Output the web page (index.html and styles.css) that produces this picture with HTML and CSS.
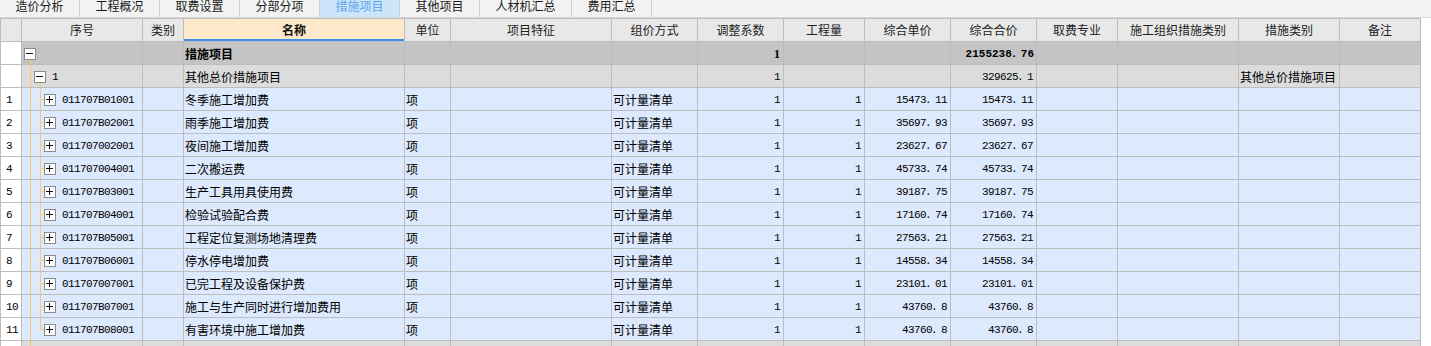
FILE: index.html
```html
<!DOCTYPE html>
<html lang="zh-CN">
<head>
<meta charset="utf-8">
<title>措施项目</title>
<link rel="stylesheet" href="styles.css">
</head>
<body>
<div class="tabs">
  <div class="tab"><span>造价分析</span></div>
  <div class="tab"><span>工程概况</span></div>
  <div class="tab"><span>取费设置</span></div>
  <div class="tab"><span>分部分项</span></div>
  <div class="tab active"><span>措施项目</span></div>
  <div class="tab"><span>其他项目</span></div>
  <div class="tab wide"><span>人材机汇总</span></div>
  <div class="tab"><span>费用汇总</span></div>
</div>
<div class="table">
  <div class="row hd">
    <div class="c n"></div><div class="c">序号</div><div class="c">类别</div><div class="c name">名称</div><div class="c">单位</div><div class="c">项目特征</div><div class="c">组价方式</div><div class="c">调整系数</div><div class="c">工程量</div><div class="c">综合单价</div><div class="c">综合合价</div><div class="c">取费专业</div><div class="c">施工组织措施类别</div><div class="c">措施类别</div><div class="c">备注</div>
  </div>
  <div class="row r0">
    <div class="c n"></div><div class="c seq"><span class="bx minus l0"></span></div><div class="c"></div><div class="c b">措施项目</div><div class="c"></div><div class="c"></div><div class="c"></div><div class="c bs">1</div><div class="c"></div><div class="c"></div><div class="c num bm">2155238<span class="d">.</span>76</div><div class="c"></div><div class="c"></div><div class="c"></div><div class="c"></div>
  </div>
  <div class="row r1">
    <div class="c n"></div><div class="c seq"><span class="bx minus l1"></span><span class="code">1</span></div><div class="c"></div><div class="c">其他总价措施项目</div><div class="c"></div><div class="c"></div><div class="c"></div><div class="c num">1</div><div class="c"></div><div class="c"></div><div class="c num">329625<span class="d">.</span>1</div><div class="c"></div><div class="c"></div><div class="c">其他总价措施项目</div><div class="c"></div>
  </div>
  <div class="row rd">
    <div class="c n">1</div><div class="c seq"><span class="bx plus l2"></span><span class="code">011707B01001</span></div><div class="c"></div><div class="c">冬季施工增加费</div><div class="c">项</div><div class="c"></div><div class="c">可计量清单</div><div class="c num">1</div><div class="c num">1</div><div class="c num">15473<span class="d">.</span>11</div><div class="c num">15473<span class="d">.</span>11</div><div class="c"></div><div class="c"></div><div class="c"></div><div class="c"></div>
  </div>
  <div class="row rd">
    <div class="c n">2</div><div class="c seq"><span class="bx plus l2"></span><span class="code">011707B02001</span></div><div class="c"></div><div class="c">雨季施工增加费</div><div class="c">项</div><div class="c"></div><div class="c">可计量清单</div><div class="c num">1</div><div class="c num">1</div><div class="c num">35697<span class="d">.</span>93</div><div class="c num">35697<span class="d">.</span>93</div><div class="c"></div><div class="c"></div><div class="c"></div><div class="c"></div>
  </div>
  <div class="row rd">
    <div class="c n">3</div><div class="c seq"><span class="bx plus l2"></span><span class="code">011707002001</span></div><div class="c"></div><div class="c">夜间施工增加费</div><div class="c">项</div><div class="c"></div><div class="c">可计量清单</div><div class="c num">1</div><div class="c num">1</div><div class="c num">23627<span class="d">.</span>67</div><div class="c num">23627<span class="d">.</span>67</div><div class="c"></div><div class="c"></div><div class="c"></div><div class="c"></div>
  </div>
  <div class="row rd">
    <div class="c n">4</div><div class="c seq"><span class="bx plus l2"></span><span class="code">011707004001</span></div><div class="c"></div><div class="c">二次搬运费</div><div class="c">项</div><div class="c"></div><div class="c">可计量清单</div><div class="c num">1</div><div class="c num">1</div><div class="c num">45733<span class="d">.</span>74</div><div class="c num">45733<span class="d">.</span>74</div><div class="c"></div><div class="c"></div><div class="c"></div><div class="c"></div>
  </div>
  <div class="row rd">
    <div class="c n">5</div><div class="c seq"><span class="bx plus l2"></span><span class="code">011707B03001</span></div><div class="c"></div><div class="c">生产工具用具使用费</div><div class="c">项</div><div class="c"></div><div class="c">可计量清单</div><div class="c num">1</div><div class="c num">1</div><div class="c num">39187<span class="d">.</span>75</div><div class="c num">39187<span class="d">.</span>75</div><div class="c"></div><div class="c"></div><div class="c"></div><div class="c"></div>
  </div>
  <div class="row rd">
    <div class="c n">6</div><div class="c seq"><span class="bx plus l2"></span><span class="code">011707B04001</span></div><div class="c"></div><div class="c">检验试验配合费</div><div class="c">项</div><div class="c"></div><div class="c">可计量清单</div><div class="c num">1</div><div class="c num">1</div><div class="c num">17160<span class="d">.</span>74</div><div class="c num">17160<span class="d">.</span>74</div><div class="c"></div><div class="c"></div><div class="c"></div><div class="c"></div>
  </div>
  <div class="row rd">
    <div class="c n">7</div><div class="c seq"><span class="bx plus l2"></span><span class="code">011707B05001</span></div><div class="c"></div><div class="c">工程定位复测场地清理费</div><div class="c">项</div><div class="c"></div><div class="c">可计量清单</div><div class="c num">1</div><div class="c num">1</div><div class="c num">27563<span class="d">.</span>21</div><div class="c num">27563<span class="d">.</span>21</div><div class="c"></div><div class="c"></div><div class="c"></div><div class="c"></div>
  </div>
  <div class="row rd">
    <div class="c n">8</div><div class="c seq"><span class="bx plus l2"></span><span class="code">011707B06001</span></div><div class="c"></div><div class="c">停水停电增加费</div><div class="c">项</div><div class="c"></div><div class="c">可计量清单</div><div class="c num">1</div><div class="c num">1</div><div class="c num">14558<span class="d">.</span>34</div><div class="c num">14558<span class="d">.</span>34</div><div class="c"></div><div class="c"></div><div class="c"></div><div class="c"></div>
  </div>
  <div class="row rd">
    <div class="c n">9</div><div class="c seq"><span class="bx plus l2"></span><span class="code">011707007001</span></div><div class="c"></div><div class="c">已完工程及设备保护费</div><div class="c">项</div><div class="c"></div><div class="c">可计量清单</div><div class="c num">1</div><div class="c num">1</div><div class="c num">23101<span class="d">.</span>01</div><div class="c num">23101<span class="d">.</span>01</div><div class="c"></div><div class="c"></div><div class="c"></div><div class="c"></div>
  </div>
  <div class="row rd">
    <div class="c n">10</div><div class="c seq"><span class="bx plus l2"></span><span class="code">011707B07001</span></div><div class="c"></div><div class="c">施工与生产同时进行增加费用</div><div class="c">项</div><div class="c"></div><div class="c">可计量清单</div><div class="c num">1</div><div class="c num">1</div><div class="c num">43760<span class="d">.</span>8</div><div class="c num">43760<span class="d">.</span>8</div><div class="c"></div><div class="c"></div><div class="c"></div><div class="c"></div>
  </div>
  <div class="row rd last">
    <div class="c n">11</div><div class="c seq"><span class="bx plus l2"></span><span class="code">011707B08001</span></div><div class="c"></div><div class="c">有害环境中施工增加费</div><div class="c">项</div><div class="c"></div><div class="c">可计量清单</div><div class="c num">1</div><div class="c num">1</div><div class="c num">43760<span class="d">.</span>8</div><div class="c num">43760<span class="d">.</span>8</div><div class="c"></div><div class="c"></div><div class="c"></div><div class="c"></div>
  </div>
  <div class="row r1 tail">
    <div class="c n"></div><div class="c seq"><span class="bx plus l1"></span></div><div class="c"></div><div class="c"></div><div class="c"></div><div class="c"></div><div class="c"></div><div class="c"></div><div class="c"></div><div class="c"></div><div class="c"></div><div class="c"></div><div class="c"></div><div class="c"></div><div class="c"></div>
  </div>
</div>
</body>
</html>
```

FILE: styles.css
```css
html, body {
  margin: 0;
  padding: 0;
  overflow: hidden;
  background: #ffffff;
}
body {
  font-family: "Noto Sans CJK SC", "Noto Sans", sans-serif;
  font-size: 12px;
  color: #000;
}

/* tabs */
.tabs {
  display: flex;
  height: 17px;
  background: #f2f2f2;
  border-bottom: 1px solid #d9d9d9;
  overflow: hidden;
}
.tab {
  width: 80px;
  box-sizing: border-box;
  border-right: 1px solid #cfcfcf;
  text-align: center;
  color: #1a1a1a;
  font-size: 12px;
  line-height: 14px;
  overflow: hidden;
}
.tab span {
  display: block;
  margin-top: -1px;
}
.tab.wide { width: 92px; }
.tab.active {
  background: #cce5fa;
  color: #5ea6ec;
}

/* grid table */
.table {
  width: 1421px;
  border-top: 1px solid #bdbdbd;
}
.row {
  display: grid;
  grid-template-columns: 21px 121px 41px 221px 46px 161px 86px 86px 81px 86px 86px 81px 121px 101px 81px;
  border-left: 1px solid #bdbdbd;
}
.c {
  box-sizing: border-box;
  height: 23px;
  border-right: 1px solid #bdbdbd;
  border-bottom: 1px solid #bdbdbd;
  padding: 2px 1px 0 1px;
  line-height: 20px;
  white-space: nowrap;
  overflow: hidden;
}
.hd .c {
  background: #e8e8e8;
  text-align: center;
  color: #222;
  padding-top: 1px;
}
.hd .name {
  background: #fee8ca;
  font-weight: bold;
  color: #111;
  box-shadow: inset 0 -2px 0 #3f8fe9;
}
.r0 .c { background: #c4c4c4; }
.r1 .c { background: #dcdcdc; }
.rd .c { background: #dde9fc; }
.row .n {
  background: #ffffff;
  font-family: "Liberation Mono", monospace;
  font-size: 11px;
  letter-spacing: -0.6px;
  padding-left: 5px;
}
.hd .n { background: #e8e8e8; }

.num {
  text-align: right;
  padding-right: 3px;
  font-family: "Liberation Mono", monospace;
  font-size: 11px;
  letter-spacing: -0.6px;
}
.d {
  display: inline-block;
  width: 9px;
  text-align: left;
  text-indent: -1px;
}
.b { font-weight: bold; }
.bs {
  text-align: right;
  padding-right: 3px;
  font-family: "Liberation Serif", serif;
  font-weight: bold;
  font-size: 12px;
}
.bm {
  font-weight: bold;
  letter-spacing: 0px;
  padding-right: 2px;
}

/* tree column */
.seq {
  display: flex;
  align-items: center;
  padding: 1px 0 0 0;
  background-clip: border-box;
}
.code {
  font-family: "Liberation Mono", monospace;
  font-size: 11px;
  letter-spacing: -0.6px;
  line-height: 20px;
  margin-left: 6px;
}
.bx {
  flex: none;
  box-sizing: border-box;
  width: 12px;
  height: 12px;
  border: 1px solid #8a8a8a;
  background: #fff;
}
.bx.minus {
  background: linear-gradient(#111, #111) 1px 4px / 7px 1px no-repeat, #fff;
}
.bx.plus {
  background:
    linear-gradient(#111, #111) 1px 4px / 7px 1px no-repeat,
    linear-gradient(#111, #111) 4px 1px / 1px 7px no-repeat,
    #fff;
}
.bx.l0 { margin-left: 2px; }
.bx.l1 { margin-left: 12px; }
.bx.l2 { margin-left: 22px; }

.r0 .seq {
  background:
    linear-gradient(#ffc570, #ffc570) 8px 17px / 1px 6px no-repeat,
    #c4c4c4;
}
.r1 .seq {
  background:
    linear-gradient(#ffc570, #ffc570) 8px 0 / 1px 23px no-repeat,
    linear-gradient(#ffc570, #ffc570) 18px 18px / 1px 5px no-repeat,
    #dcdcdc;
}
.r1.tail .seq {
  background:
    linear-gradient(#ffc570, #ffc570) 8px 0 / 1px 23px no-repeat,
    #dcdcdc;
}
.rd .seq {
  background:
    linear-gradient(#ffc570, #ffc570) 8px 0 / 1px 23px no-repeat,
    linear-gradient(#ffc570, #ffc570) 18px 0 / 1px 23px no-repeat,
    linear-gradient(#ffc570, #ffc570) 18px 11px / 4px 1px no-repeat,
    #dde9fc;
}
.rd.last .seq {
  background:
    linear-gradient(#ffc570, #ffc570) 8px 0 / 1px 23px no-repeat,
    linear-gradient(#ffc570, #ffc570) 18px 0 / 1px 12px no-repeat,
    linear-gradient(#ffc570, #ffc570) 18px 11px / 4px 1px no-repeat,
    #dde9fc;
}
```
